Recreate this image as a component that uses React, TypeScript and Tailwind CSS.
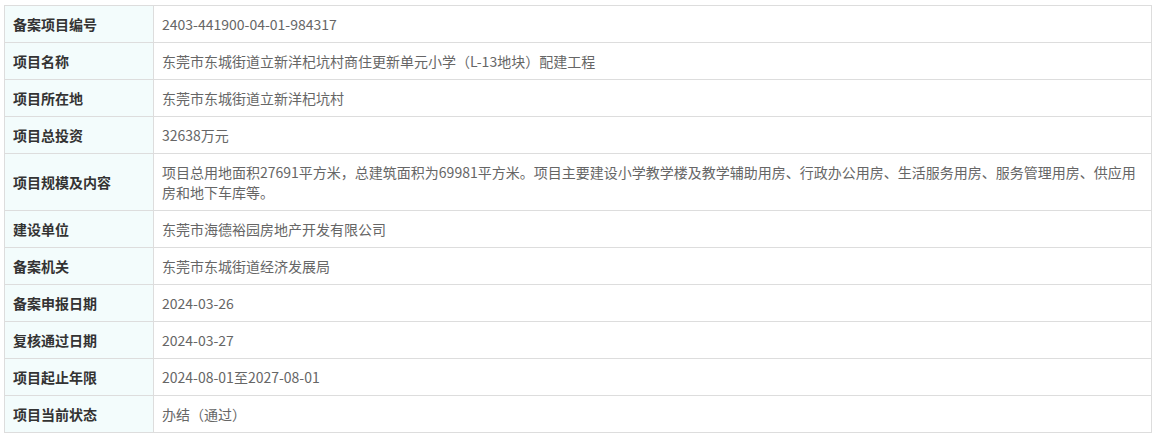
const rows: [string, string][] = [
  ['备案项目编号', '2403-441900-04-01-984317'],
  ['项目名称', '东莞市东城街道立新洋杞坑村商住更新单元小学（L-13地块）配建工程'],
  ['项目所在地', '东莞市东城街道立新洋杞坑村'],
  ['项目总投资', '32638万元'],
  [
    '项目规模及内容',
    '项目总用地面积27691平方米，总建筑面积为69981平方米。项目主要建设小学教学楼及教学辅助用房、行政办公用房、生活服务用房、服务管理用房、供应用房和地下车库等。',
  ],
  ['建设单位', '东莞市海德裕园房地产开发有限公司'],
  ['备案机关', '东莞市东城街道经济发展局'],
  ['备案申报日期', '2024-03-26'],
  ['复核通过日期', '2024-03-27'],
  ['项目起止年限', '2024-08-01至2027-08-01'],
  ['项目当前状态', '办结（通过）'],
];

export default function App() {
  return (
    <div
      className="min-h-screen bg-white pt-[5px] pl-[4px] pr-[6px]"
      style={{ fontFamily: '"Microsoft YaHei", "Noto Sans CJK SC", sans-serif' }}
    >
      <table className="w-[1148px] border-collapse border border-[#dddddd] text-[14px] leading-5">
        <tbody>
          {rows.map(([label, value]) => (
            <tr key={label}>
              <td className="w-[149px] border border-[#dddddd] bg-[#f3fcfc] px-2 py-2 align-middle font-bold text-[#333333]">
                {label}
              </td>
              <td className="border border-[#dddddd] px-2 py-2 align-middle text-[#666666]">
                {value}
              </td>
            </tr>
          ))}
        </tbody>
      </table>
    </div>
  );
}
